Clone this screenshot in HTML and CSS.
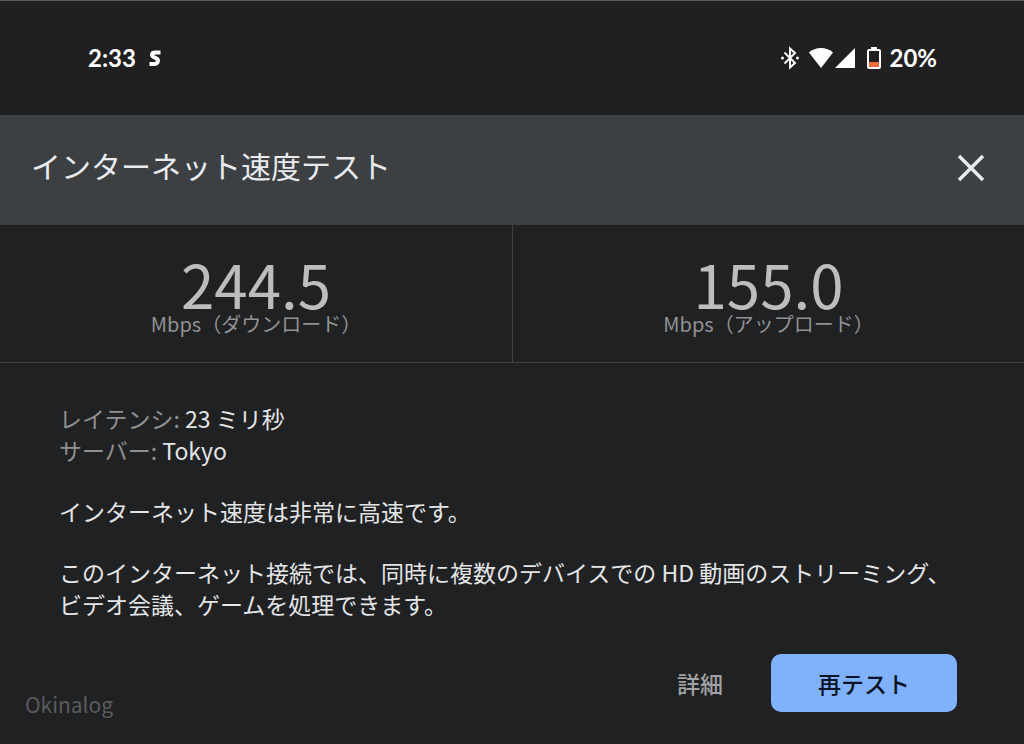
FILE: index.html
```html
<!DOCTYPE html>
<html lang="ja">
<head>
    <meta charset="UTF-8">
    <meta name="viewport" content="width=device-width, initial-scale=1.0">
    <title>インターネット速度テスト</title>
    <link rel="stylesheet" href="styles.css">
</head>
<body>
    <div class="status-bar">
        <div class="status-left">
            <span>2:33</span>
            <svg width="14" height="18" viewBox="0 0 14 18" aria-hidden="true">
                <path d="M12.500 3.500H7.500C5 3.500 4 4.600 4 5.900c0 3 6 2.300 6 5.600 0 1.900-1.500 3.500-4 3.500H1.500" fill="none" stroke="#fff" stroke-width="4"/>
            </svg>
        </div>
        <div class="status-right">
            <svg class="bluetooth" width="20" height="24" viewBox="0 0 20 24" aria-hidden="true">
                <path d="M4.500 6.500l10.500 10.500L10 21.500V2.500L15 7 4.500 17.500" fill="none" stroke="#fff" stroke-width="2"/>
                <circle cx="2.500" cy="12" r="1.500" fill="#fff"/>
                <circle cx="17.500" cy="12" r="1.500" fill="#fff"/>
            </svg>
            <svg width="26" height="22" viewBox="0 0 26 22" aria-hidden="true">
                <path d="M1 5.500C4 2.500 8.500 1 13 1s9 1.500 12 4.500L13 21z" fill="#fff"/>
            </svg>
            <svg class="signal" width="21" height="22" viewBox="0 0 21 22" aria-hidden="true">
                <path d="M21 1v20H1z" fill="#fff"/>
            </svg>
            <svg class="battery" width="14" height="22" viewBox="0 0 14 22" aria-hidden="true">
                <path d="M4 0h6v3H4z" fill="#fff"/>
                <rect x="1" y="3" width="12" height="18" rx="1" fill="none" stroke="#fff" stroke-width="2"/>
                <path d="M2 15h10v5H2z" fill="#f06a3c"/>
            </svg>
            <span>20%</span>
        </div>
    </div>

    <header class="header">
        <h1>インターネット速度テスト</h1>
        <button class="close" type="button" aria-label="閉じる">
            <svg width="28" height="28" viewBox="0 0 28 28" aria-hidden="true">
                <path d="M2 2l24 24M26 2L2 26" stroke="#e8eaed" stroke-width="3.500"/>
            </svg>
        </button>
    </header>

    <section class="results">
        <div class="result">
            <div class="speed">244.5</div>
            <div class="unit">Mbps（ダウンロード）</div>
        </div>
        <div class="result">
            <div class="speed">155.0</div>
            <div class="unit">Mbps（アップロード）</div>
        </div>
    </section>

    <main class="details">
        <p><span class="label">レイテンシ:</span> 23 ミリ秒<br><span class="label">サーバー:</span> Tokyo</p>
        <p>インターネット速度は非常に高速です。</p>
        <p>このインターネット接続では、同時に複数のデバイスでの HD 動画のストリーミング、ビデオ会議、ゲームを処理できます。</p>
    </main>

    <footer class="footer">
        <span class="credit">Okinalog</span>
        <div class="actions">
            <button class="more" type="button">詳細</button>
            <button class="retest" type="button">再テスト</button>
        </div>
    </footer>
</body>
</html>
```
FILE: styles.css
```css
* {
    box-sizing: border-box;
}

body {
    margin: 0;
    min-height: 100vh;
    display: flex;
    flex-direction: column;
    background-color: #202123;
    color: #e4e5e7;
    font-family: "Noto Sans CJK JP", sans-serif;
    font-size: 23px;
    line-height: 32px;
}

h1, p {
    margin: 0;
}

button {
    border: none;
    padding: 0;
    background: none;
    font: inherit;
    cursor: pointer;
}

svg {
    display: block;
}

/* Phone status bar */
.status-bar {
    display: flex;
    justify-content: space-between;
    align-items: center;
    height: 115px;
    padding: 0 87px 0 88px;
    background-color: #202020;
    border-top: 1px solid #5c5c5c;
    color: #fff;
    font-family: Lato, sans-serif;
    font-size: 24px;
    font-weight: bold;
}

.status-left, .status-right {
    display: flex;
    align-items: center;
}

.status-left {
    gap: 12px;
}

.bluetooth {
    margin-right: 8px;
}

.battery {
    margin: 0 8px 0 12px;
}

/* Title bar */
.header {
    display: flex;
    justify-content: space-between;
    align-items: flex-start;
    height: 110px;
    padding: 34px 39px 0 31px;
    background-color: #3c4043;
}

.close {
    padding-top: 5px;
}

h1 {
    color: #e8eaed;
    font-size: 30px;
    font-weight: normal;
}

/* Download and upload */
.results {
    display: grid;
    grid-template-columns: 1fr 1fr;
    border-bottom: 1px solid #3f4042;
}

.result {
    padding: 34px 0 24px;
    text-align: center;
}

.result + .result {
    border-left: 1px solid #3f4042;
}

.speed {
    color: #bdbdbd;
    font-size: 60px;
    line-height: 48px;
}

.unit {
    padding-top: 2px;
    color: #929294;
    font-size: 20px;
    line-height: 29px;
}

.details {
    display: flex;
    flex-direction: column;
    gap: 29px;
    padding: 39px 59px 0;
}

.label {
    color: #8f9092;
}

/* Bottom buttons */
.footer {
    display: flex;
    justify-content: space-between;
    align-items: flex-end;
    margin-top: auto;
    padding: 0 67px 24px 25px;
}

.credit {
    color: #5a5b5d;
    font-size: 21px;
}

.actions {
    display: flex;
    align-items: center;
    gap: 48px;
    padding-bottom: 8px;
}

.more {
    color: #a0a1a3;
    font-weight: 500;
}

.retest {
    width: 186px;
    height: 58px;
    border-radius: 10px;
    background-color: #7fb2fb;
    color: #0c1526;
    font-weight: 500;
}
```
